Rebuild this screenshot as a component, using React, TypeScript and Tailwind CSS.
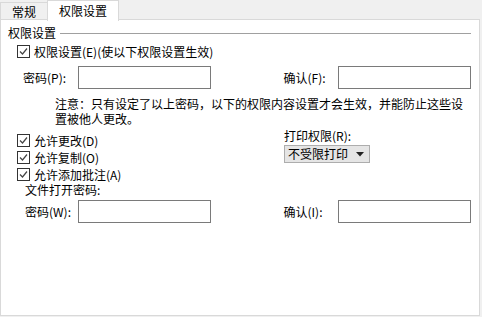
import React from "react";

const font = "font-['Noto_Sans_CJK_SC','Microsoft_YaHei',sans-serif]";

const Check: React.FC = () => (
  <span className="w-[13px] h-[13px] border border-[#333333] bg-white flex items-center justify-center shrink-0">
    <svg width="9" height="9" viewBox="0 0 9 9">
      <path d="M1 4.5 L3.5 7 L8 1.5" fill="none" stroke="#444" strokeWidth="1.2" />
    </svg>
  </span>
);

const CheckRow: React.FC<{ label: string; className?: string }> = ({ label, className }) => (
  <div className={`flex items-center gap-[4px] h-[17px] ${className ?? ""}`}>
    <Check />
    <span>{label}</span>
  </div>
);

const Input: React.FC = () => (
  <div className="w-[134px] h-[23px] border border-[#7a7a7a] bg-white" />
);

const App: React.FC = () => {
  return (
    <div className={`w-[482px] h-[317px] bg-[#f0f0f0] text-[12px] leading-[14px] text-black ${font}`}>
      {/* tabs */}
      <div className="flex items-end h-[20px] relative z-10">
        <div className="w-[47px] h-[18px] flex items-center justify-center border-l border-t border-[#d9d9d9]">
          常规
        </div>
        <div className="w-[72px] h-[21px] flex items-center justify-center bg-white border-l border-t border-r border-[#d9d9d9] -mb-px">
          权限设置
        </div>
      </div>

      {/* panel */}
      <div className="w-[480px] h-[297px] -mt-px bg-white border border-[#d9d9d9] pl-[7px] pr-[8px] pt-[6px]">
        <div className="flex items-center h-[14px]">
          <span>权限设置</span>
          <div className="flex-1 h-px bg-[#a0a0a0] ml-[4px]" />
        </div>

        <CheckRow label="权限设置(E)(使以下权限设置生效)" className="mt-[3px] ml-[9px]" />

        <div className="flex items-center mt-[6px]">
          <span className="w-[70px] pl-[15px]">密码(P):</span>
          <Input />
          <span className="w-[128px] pl-[73px]">确认(F):</span>
          <Input />
        </div>

        <div className="mt-[7px] ml-[47px] whitespace-nowrap leading-[15px]">
          <div>注意：只有设定了以上密码，以下的权限内容设置才会生效，并能防止这些设</div>
          <div>置被他人更改。</div>
        </div>

        <div className="flex mt-[6px]">
          <div className="w-[276px] pl-[9px]">
            <CheckRow label="允许更改(D)" />
            <CheckRow label="允许复制(O)" />
            <CheckRow label="允许添加批注(A)" />
          </div>
          <div className="-mt-[3px]">
            <div className="h-[14px]">打印权限(R):</div>
            <div className="mt-[2px] w-[86px] h-[18px] bg-[#e5e5e5] border border-[#adadad] flex items-center pl-[3px]">
              <span>不受限打印</span>
              <svg className="ml-[8px]" width="8" height="5" viewBox="0 0 8 5">
                <path d="M0 0 L8 0 L4 4.5 Z" fill="#222" />
              </svg>
            </div>
          </div>
        </div>

        <div className="pl-[17px] h-[15px]">文件打开密码:</div>

        <div className="flex items-center mt-[2px]">
          <span className="w-[70px] pl-[17px]">密码(W):</span>
          <Input />
          <span className="w-[128px] pl-[73px]">确认(I):</span>
          <Input />
        </div>
      </div>
    </div>
  );
};

export default App;
